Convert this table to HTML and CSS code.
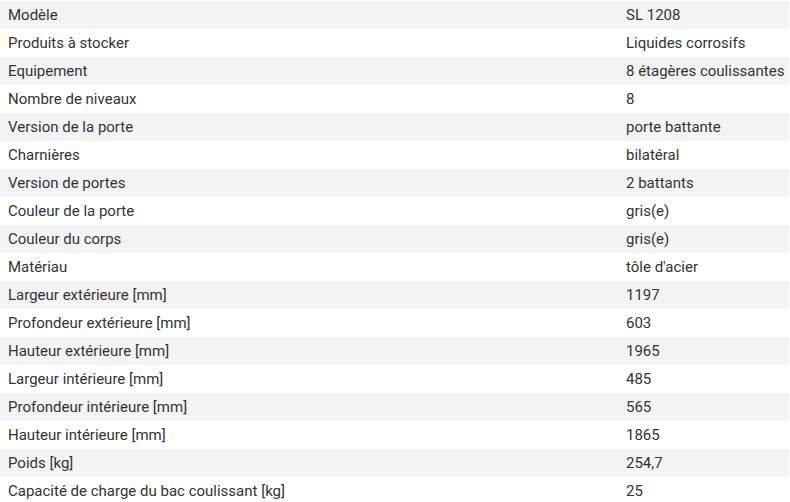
FILE: index.html
```html
<!DOCTYPE html>
<html lang="fr">
<head>
<meta charset="utf-8">
<link rel="stylesheet" href="styles.css">
</head>
<body>
<table class="specs">
<tbody>
<tr><td class="label">Modèle</td><td class="value">SL 1208</td></tr>
<tr><td class="label">Produits à stocker</td><td class="value">Liquides corrosifs</td></tr>
<tr><td class="label">Equipement</td><td class="value">8 étagères coulissantes</td></tr>
<tr><td class="label">Nombre de niveaux</td><td class="value">8</td></tr>
<tr><td class="label">Version de la porte</td><td class="value">porte battante</td></tr>
<tr><td class="label">Charnières</td><td class="value">bilatéral</td></tr>
<tr><td class="label">Version de portes</td><td class="value">2 battants</td></tr>
<tr><td class="label">Couleur de la porte</td><td class="value">gris(e)</td></tr>
<tr><td class="label">Couleur du corps</td><td class="value">gris(e)</td></tr>
<tr><td class="label">Matériau</td><td class="value">tôle d'acier</td></tr>
<tr><td class="label">Largeur extérieure [mm]</td><td class="value">1197</td></tr>
<tr><td class="label">Profondeur extérieure [mm]</td><td class="value">603</td></tr>
<tr><td class="label">Hauteur extérieure [mm]</td><td class="value">1965</td></tr>
<tr><td class="label">Largeur intérieure [mm]</td><td class="value">485</td></tr>
<tr><td class="label">Profondeur intérieure [mm]</td><td class="value">565</td></tr>
<tr><td class="label">Hauteur intérieure [mm]</td><td class="value">1865</td></tr>
<tr><td class="label">Poids [kg]</td><td class="value">254,7</td></tr>
<tr><td class="label">Capacité de charge du bac coulissant [kg]</td><td class="value">25</td></tr>
</tbody>
</table>
</body>
</html>
```
FILE: styles.css
```css
html, body {
  margin: 0;
  padding: 0;
  background: #ffffff;
}
body {
  padding-top: 1px;
  font-family: Roboto, "Liberation Sans", Arial, sans-serif;
  font-size: 15px;
  color: #333333;
}
.specs {
  width: 789px;
  border-collapse: collapse;
  table-layout: fixed;
}
.specs tr {
  height: 28px;
}
.specs tr:nth-child(odd) {
  background: #f3f3f5;
}
.specs td {
  padding: 0 8px;
  height: 28px;
  line-height: 28px;
  white-space: nowrap;
  vertical-align: middle;
}
.specs .label {
  width: 602px;
}
```
